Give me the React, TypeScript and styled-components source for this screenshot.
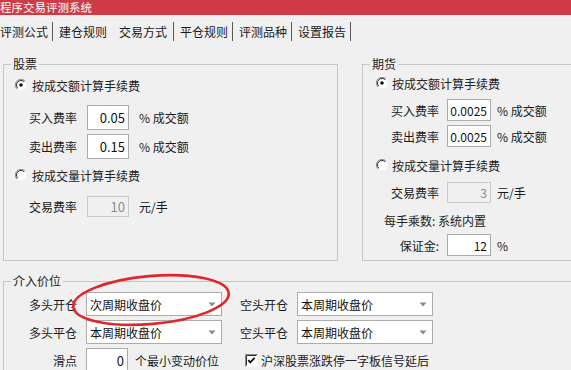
import styled, { createGlobalStyle } from "styled-components";

const GlobalStyle = createGlobalStyle`
  html, body {
    margin: 0;
    padding: 0;
    background: #f0f0f0;
    overflow: hidden;
  }
  body {
    font-family: "Noto Sans CJK SC", "Liberation Sans", sans-serif;
    font-size: 12px;
    color: #222;
  }
`;

const Window = styled.div`
  position: relative;
  width: 571px;
  height: 370px;
  overflow: hidden;
  background: #f0f0f0;
`;

const TitleBar = styled.div`
  height: 15px;
  background: #cf3b44;
  color: #fff;
  font-size: 11.5px;
  line-height: 15px;
  white-space: nowrap;
  overflow: hidden;
`;

const TabStrip = styled.div`
  display: flex;
  height: 24px;
  margin-top: 4px;
`;

const Tab = styled.div<{ $active?: boolean; $sep?: boolean; $first?: boolean }>`
  position: relative;
  display: flex;
  align-items: center;
  padding: 0 ${(p) => (p.$active ? 7 : 5)}px 0
    ${(p) => (p.$first ? 0 : p.$active ? 7 : 6)}px;
  font-size: 12px;
  color: #1a1a1a;
  white-space: nowrap;
  cursor: default;

  &::after {
    content: "";
    display: ${(p) => (p.$sep ? "block" : "none")};
    position: absolute;
    right: 0;
    top: 3px;
    bottom: 2px;
    width: 1px;
    background: #5a5a5a;
  }
`;

const GroupRow = styled.div`
  display: flex;
  gap: 24px;
  padding: 14px 0 0 3px;
`;

const Group = styled.fieldset<{ $w: number; $h: number }>`
  box-sizing: border-box;
  flex-shrink: 0;
  width: ${(p) => p.$w}px;
  height: ${(p) => p.$h}px;
  min-width: 0;
  margin: 0;
  padding: 0;
  border: 1px solid #c6c6c6;
`;

const Legend = styled.legend`
  margin-left: 7px;
  padding: 0 2px;
  font-size: 12px;
  line-height: 14px;
  color: #1a1a1a;
`;

const Stack = styled.div<{ $pl: number; $pt: number }>`
  display: flex;
  flex-direction: column;
  padding: ${(p) => p.$pt}px 0 0 ${(p) => p.$pl}px;
`;

const RadioLine = styled.div<{ $mt: number; $gap: number }>`
  display: flex;
  align-items: center;
  gap: ${(p) => p.$gap}px;
  height: 20px;
  margin-top: ${(p) => p.$mt}px;
  white-space: nowrap;
`;

const FieldLine = styled.div<{
  $mt: number;
  $h: number;
  $indent: number;
  $label: number;
  $gap: number;
  $ugap: number;
}>`
  display: grid;
  grid-template-columns: ${(p) => p.$label}px auto auto;
  justify-content: start;
  column-gap: ${(p) => p.$gap}px;
  align-items: center;
  height: ${(p) => p.$h}px;
  margin-top: ${(p) => p.$mt}px;
  padding-left: ${(p) => p.$indent}px;
  white-space: nowrap;

  & > span:last-child {
    margin-left: ${(p) => p.$ugap - p.$gap}px;
  }
`;

const TextLine = styled.div<{ $mt: number; $indent: number }>`
  height: 16px;
  line-height: 16px;
  margin-top: ${(p) => p.$mt}px;
  padding-left: ${(p) => p.$indent}px;
  white-space: nowrap;
`;

const Label = styled.span`
  text-align: right;
  color: #1a1a1a;
`;

const Unit = styled.span`
  color: #1a1a1a;
`;

const NumBox = styled.input<{ $w: number; $h: number; $fs: number }>`
  box-sizing: border-box;
  width: ${(p) => p.$w}px;
  height: ${(p) => p.$h}px;
  margin: 0;
  padding: 0 3px 0 0;
  border: 1px solid #ababab;
  background: #fff;
  color: #111;
  font-family: inherit;
  font-size: ${(p) => p.$fs}px;
  text-align: right;
  outline: none;

  &:disabled {
    background: #f0f0f0;
    border-color: #c9c9c9;
    color: #8c8c8c;
  }
`;

const PriceGroup = styled(Group)`
  margin: 13px 0 0 3px;
`;

const PriceGrid = styled.div`
  display: grid;
  grid-template-columns: 50px 136px 57px 136px;
  grid-auto-rows: 24px;
  column-gap: 9px;
  row-gap: 4px;
  align-items: center;
  padding: 4px 0 0 23px;
  white-space: nowrap;
`;

const Combo = styled.div`
  box-sizing: border-box;
  display: flex;
  align-items: center;
  width: 136px;
  height: 24px;
  padding-left: 3px;
  background: #fff;
  border: 1px solid #acacac;
  font-size: 12px;
  color: #111;
`;

const ComboText = styled.span`
  flex: 1;
`;

const ComboArrow = styled.span`
  display: flex;
  align-items: center;
  justify-content: center;
  width: 18px;
  height: 100%;
`;

const Inline = styled.div<{ $gap: number }>`
  display: flex;
  align-items: center;
  gap: ${(p) => p.$gap}px;
`;

const CheckLine = styled.label`
  grid-column: 3 / span 2;
  display: flex;
  align-items: center;
  gap: 3px;
  margin-left: 14px;
`;

const Overlay = styled.svg`
  position: absolute;
  left: 67px;
  top: 267px;
  pointer-events: none;
`;

const Radio = ({ checked }: { checked?: boolean }) => (
  <svg width="12" height="12" viewBox="0 0 12 12">
    <circle cx="6" cy="6" r="5.5" fill="#fff" />
    <path d="M10 2 A5.5 5.5 0 0 0 2 10" fill="none" stroke="#8a8a8a" strokeWidth="1" />
    <path d="M9.2 2.8 A4.5 4.5 0 0 0 2.8 9.2" fill="none" stroke="#2a2a2a" strokeWidth="1" />
    {checked && <circle cx="6" cy="6" r="1.8" fill="#111" />}
  </svg>
);

const Check = () => (
  <svg width="13" height="13" viewBox="0 0 13 13">
    <rect x="0.5" y="0.5" width="12" height="12" fill="#fff" />
    <path d="M0.5 12.5 V0.5 H12.5" fill="none" stroke="#8a8a8a" />
    <path d="M1.5 11.5 V1.5 H11.5" fill="none" stroke="#2a2a2a" />
    <path d="M3.3 6.2 L5.3 8.4 L9.6 3.8" fill="none" stroke="#111" strokeWidth="1.8" />
  </svg>
);

const Arrow = () => (
  <svg width="8" height="5" viewBox="0 0 8 5">
    <path d="M0.5 0.5 H7.5 L4 4.5 Z" fill="#8a8a8a" />
  </svg>
);

type Fee = { label: string; value: string; unit: string; disabled?: boolean; mt: number; h: number };

const stockFees: Fee[] = [
  { label: "买入费率", value: "0.05", unit: "% 成交额", mt: 10, h: 25 },
  { label: "卖出费率", value: "0.15", unit: "% 成交额", mt: 4, h: 25 },
];

const futureFees: Fee[] = [
  { label: "买入费率", value: "0.0025", unit: "% 成交额", mt: 6, h: 22 },
  { label: "卖出费率", value: "0.0025", unit: "% 成交额", mt: 4, h: 22 },
];

const tabs = ["评测公式", "建仓规则", "交易方式", "平仓规则", "评测品种", "设置报告"];

const StockField = ({ f }: { f: Fee }) => (
  <FieldLine $mt={f.mt} $h={f.h} $indent={12} $label={50} $gap={10} $ugap={10}>
    <Label>{f.label}</Label>
    <NumBox $w={42} $h={f.h} $fs={13} defaultValue={f.value} disabled={f.disabled} readOnly />
    <Unit>{f.unit}</Unit>
  </FieldLine>
);

const FutureField = ({ f }: { f: Fee }) => (
  <FieldLine $mt={f.mt} $h={f.h} $indent={8} $label={55} $gap={8} $ugap={6}>
    <Label>{f.label}</Label>
    <NumBox $w={44} $h={f.h} $fs={12} defaultValue={f.value} disabled={f.disabled} readOnly />
    <Unit>{f.unit}</Unit>
  </FieldLine>
);

const ComboBox = ({ text }: { text: string }) => (
  <Combo>
    <ComboText>{text}</ComboText>
    <ComboArrow>
      <Arrow />
    </ComboArrow>
  </Combo>
);

export default function App() {
  return (
    <Window>
      <GlobalStyle />
      <TitleBar>程序交易评测系统</TitleBar>
      <TabStrip>
        {tabs.map((t, i) => (
          <Tab key={t} $first={i === 0} $active={i === 2} $sep={i !== 1}>
            {t}
          </Tab>
        ))}
      </TabStrip>

      <GroupRow>
        <Group $w={335} $h={204}>
          <Legend>股票</Legend>
          <Stack $pl={11} $pt={4}>
            <RadioLine $mt={0} $gap={5}>
              <Radio checked />
              按成交额计算手续费
            </RadioLine>
            {stockFees.map((f) => (
              <StockField key={f.label} f={f} />
            ))}
            <RadioLine $mt={6} $gap={5}>
              <Radio />
              按成交量计算手续费
            </RadioLine>
            <StockField f={{ label: "交易费率", value: "10", unit: "元/手", disabled: true, mt: 11, h: 21 }} />
          </Stack>
        </Group>

        <Group $w={240} $h={204}>
          <Legend>期货</Legend>
          <Stack $pl={13} $pt={2}>
            <RadioLine $mt={0} $gap={4}>
              <Radio checked />
              按成交额计算手续费
            </RadioLine>
            {futureFees.map((f) => (
              <FutureField key={f.label} f={f} />
            ))}
            <RadioLine $mt={8} $gap={4}>
              <Radio />
              按成交量计算手续费
            </RadioLine>
            <FutureField f={{ label: "交易费率", value: "3", unit: "元/手", disabled: true, mt: 7, h: 21 }} />
            <TextLine $mt={10} $indent={8}>
              每手乘数: 系统内置
            </TextLine>
            <FutureField f={{ label: "保证金:", value: "12", unit: "%", mt: 5, h: 22 }} />
          </Stack>
        </Group>
      </GroupRow>

      <PriceGroup $w={620} $h={130}>
        <Legend>介入价位</Legend>
        <PriceGrid>
          <Label>多头开仓</Label>
          <ComboBox text="次周期收盘价" />
          <Label>空头开仓</Label>
          <ComboBox text="本周期收盘价" />

          <Label>多头平仓</Label>
          <ComboBox text="本周期收盘价" />
          <Label>空头平仓</Label>
          <ComboBox text="本周期收盘价" />

          <Label>滑点</Label>
          <Inline $gap={7}>
            <NumBox $w={42} $h={24} $fs={13} defaultValue="0" readOnly />
            <Unit>个最小变动价位</Unit>
          </Inline>
          <CheckLine>
            <Check />
            沪深股票涨跌停一字板信号延后
          </CheckLine>
        </PriceGrid>
      </PriceGroup>

      <Overlay width="172" height="66" viewBox="0 0 172 66">
        <ellipse
          cx="84"
          cy="33"
          rx="78"
          ry="24"
          fill="none"
          stroke="#e0262a"
          strokeWidth="2.6"
          transform="rotate(-5 84 33)"
        />
      </Overlay>
    </Window>
  );
}
